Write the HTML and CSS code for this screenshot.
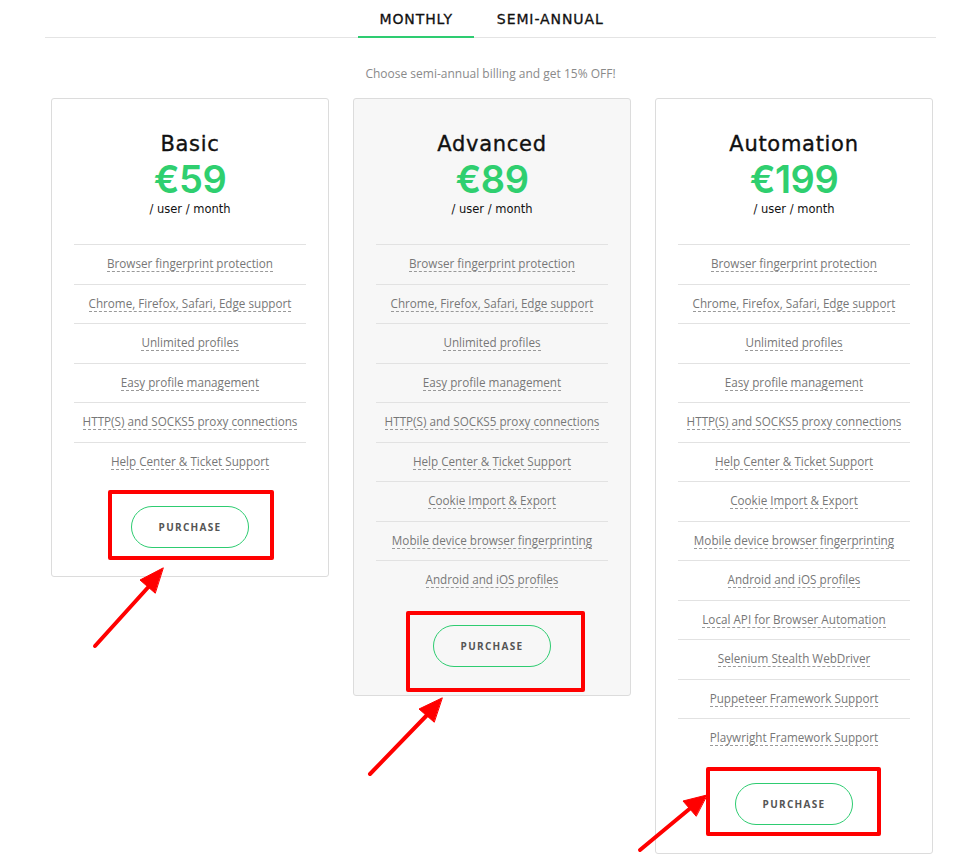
FILE: index.html
```html
<!DOCTYPE html>
<html>
<head>
<meta charset="utf-8">
<link rel="stylesheet" href="styles.css">
</head>
<body>
<div class="page">
  <div class="tabs">
    <div class="tab active">MONTHLY</div>
    <div class="tab">SEMI-ANNUAL</div>
  </div>
  <p class="note">Choose semi-annual billing and get 15% OFF!</p>
  <div class="plans">
    <div class="card">
      <h2 class="title">Basic</h2>
      <div class="price">€59</div>
      <div class="per">/ user / month</div>
      <ul class="features">
        <li><span>Browser fingerprint protection</span></li>
        <li><span>Chrome, Firefox, Safari, Edge support</span></li>
        <li><span>Unlimited profiles</span></li>
        <li><span>Easy profile management</span></li>
        <li><span>HTTP(S) and SOCKS5 proxy connections</span></li>
        <li><span>Help Center &amp; Ticket Support</span></li>
      </ul>
      <div class="action">
        <span class="mark"></span>
        <button class="buy">PURCHASE</button>
      </div>
    </div>
    <div class="card featured">
      <h2 class="title">Advanced</h2>
      <div class="price">€89</div>
      <div class="per">/ user / month</div>
      <ul class="features">
        <li><span>Browser fingerprint protection</span></li>
        <li><span>Chrome, Firefox, Safari, Edge support</span></li>
        <li><span>Unlimited profiles</span></li>
        <li><span>Easy profile management</span></li>
        <li><span>HTTP(S) and SOCKS5 proxy connections</span></li>
        <li><span>Help Center &amp; Ticket Support</span></li>
        <li><span>Cookie Import &amp; Export</span></li>
        <li><span>Mobile device browser fingerprinting</span></li>
        <li><span>Android and iOS profiles</span></li>
      </ul>
      <div class="action">
        <span class="mark"></span>
        <button class="buy">PURCHASE</button>
      </div>
    </div>
    <div class="card">
      <h2 class="title">Automation</h2>
      <div class="price">€199</div>
      <div class="per">/ user / month</div>
      <ul class="features">
        <li><span>Browser fingerprint protection</span></li>
        <li><span>Chrome, Firefox, Safari, Edge support</span></li>
        <li><span>Unlimited profiles</span></li>
        <li><span>Easy profile management</span></li>
        <li><span>HTTP(S) and SOCKS5 proxy connections</span></li>
        <li><span>Help Center &amp; Ticket Support</span></li>
        <li><span>Cookie Import &amp; Export</span></li>
        <li><span>Mobile device browser fingerprinting</span></li>
        <li><span>Android and iOS profiles</span></li>
        <li><span>Local API for Browser Automation</span></li>
        <li><span>Selenium Stealth WebDriver</span></li>
        <li><span>Puppeteer Framework Support</span></li>
        <li><span>Playwright Framework Support</span></li>
      </ul>
      <div class="action">
        <span class="mark"></span>
        <button class="buy">PURCHASE</button>
      </div>
    </div>
  </div>
  <svg class="arrows" width="979" height="864" viewBox="0 0 979 864">
    <g stroke="#f00" stroke-width="4" stroke-linecap="round" fill="#f00">
      <line x1="95" y1="646" x2="152" y2="583"/>
      <polygon points="163,568 140,580 155,593" stroke-width="1"/>
      <line x1="370" y1="774" x2="430" y2="712"/>
      <polygon points="442,698 419,709 434,722" stroke-width="1"/>
      <line x1="640" y1="850" x2="693" y2="806"/>
      <polygon points="707,795 683,801 696,816" stroke-width="1"/>
    </g>
  </svg>
</div>
</body>
</html>
```
FILE: styles.css
```css
* { box-sizing: border-box; }
html, body { margin: 0; padding: 0; background: #fff; }
body { font-family: "Open Sans", "Noto Sans", sans-serif; color: #222; }
.page { position: relative; width: 979px; height: 864px; padding: 0 43px 0 45px; overflow: hidden; }
.tabs {
  display: flex; justify-content: center;
  border-bottom: 1px solid #e4e4e4;
  height: 38px;
  padding-left: 2px;
}
.tab {
  font-family: "DejaVu Sans", sans-serif;
  font-size: 14px; font-weight: 500; color: #111;
  letter-spacing: 0.9px;
  -webkit-text-stroke: 0.3px #111;
  padding: 11px 21px 0;
  height: 38px;
  margin-bottom: -1px;
}
.tab.active { border-bottom: 2px solid #2ecc71; }
.tab + .tab { margin-left: 2px; }
.note {
  margin: 28px 0 0; text-align: center;
  font-size: 12px; color: #8a8a8a; line-height: 16px;
}
.plans {
  display: flex; align-items: flex-start; gap: 24px;
  padding: 0 5px 0 6px; margin-top: 16px;
}
.card {
  flex: 0 0 278px;
  border: 1px solid #dcdcdc; border-radius: 3px;
  padding: 30px 22px 28px;
  background: #fff;
  text-align: center;
}
.card.featured { background: #f7f7f7; }
.title {
  font-family: "DejaVu Sans", sans-serif;
  font-weight: 500; font-size: 21px; letter-spacing: 0.7px;
  -webkit-text-stroke: 0.35px #111;
  margin: 0; line-height: 30px; color: #111;
}
.price {
  font-family: "Inter", sans-serif;
  font-weight: 600; font-size: 38px; color: #2fcf6f;
  line-height: 40px; letter-spacing: -0.5px; margin-top: 0;
}
.per {
  font-family: "DejaVu Sans", sans-serif;
  font-size: 11.5px; color: #111; line-height: 16px; margin-top: 2px;
}
.features { list-style: none; margin: 27px 0 0; padding: 0; }
.features li {
  border-top: 1px solid #e2e2e2;
  height: 39.5px; display: flex; align-items: center; justify-content: center;
  font-size: 11.7px; color: #777;
}
.features li span { border-bottom: 1px dashed #999; line-height: 15px; }
.action { position: relative; display: flex; justify-content: center; margin-top: 25px; }
.buy {
  width: 118px; height: 42px; border: 1px solid #2ecc71; border-radius: 21px;
  background: transparent; font-family: "Open Sans", sans-serif;
  font-size: 10px; font-weight: 700; letter-spacing: 1.3px; color: #555;
  padding: 0;
}
.mark {
  position: absolute; left: 50%; top: -16px; width: 166px; height: 70px;
  margin-left: -82px;
  border: 4px solid #f00; border-radius: 2px;
}
.featured .mark { width: 179px; height: 81px; top: -14px; margin-left: -86px; }
.card:last-child .mark { width: 175px; height: 69px; top: -16px; margin-left: -88px; }
.arrows { position: absolute; left: 0; top: 0; pointer-events: none; }
```
